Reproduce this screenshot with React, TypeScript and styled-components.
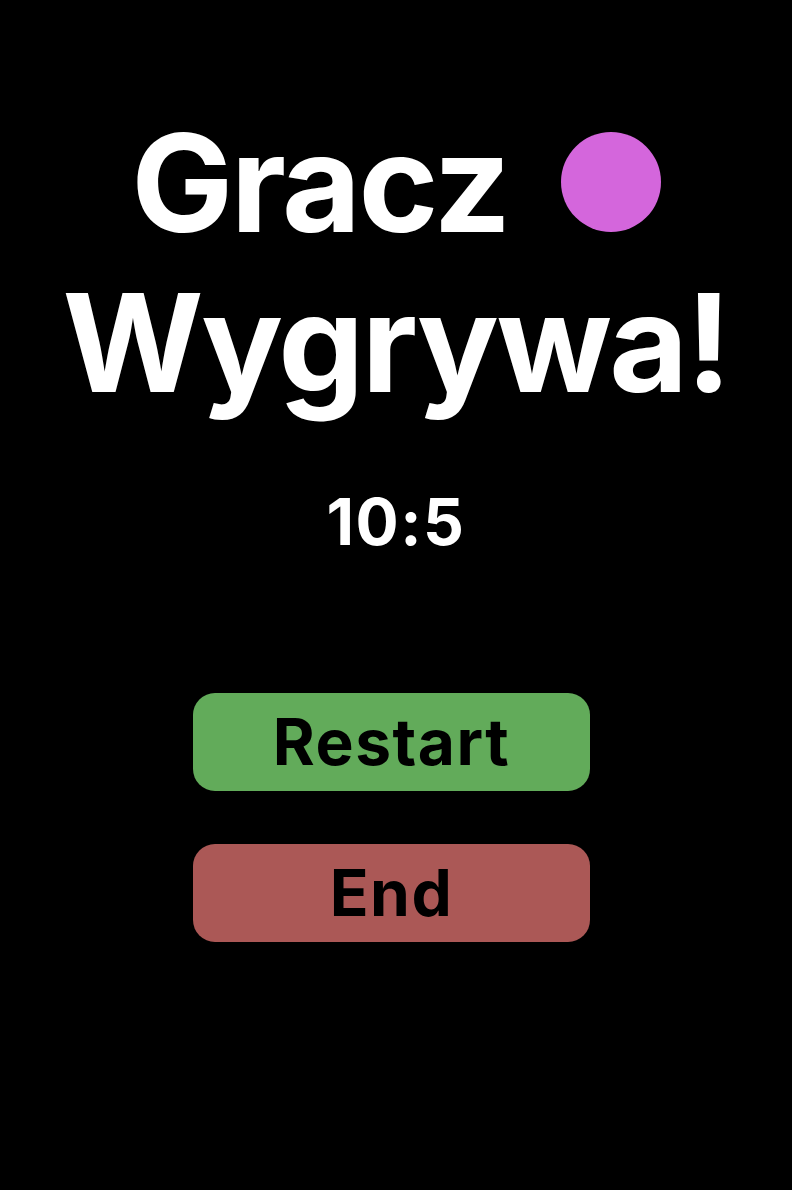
import React from "react";
import styled, { createGlobalStyle } from "styled-components";

const Global = createGlobalStyle`
  html, body {
    margin: 0;
    padding: 0;
    background: #000;
  }
  body {
    font-family: Inter, "Noto Sans", sans-serif;
    color: #fff;
  }
`;

const Screen = styled.main`
  min-height: 1190px;
  display: flex;
  flex-direction: column;
  align-items: center;
  padding-top: 103px;
  box-sizing: border-box;
`;

const Title = styled.h1`
  margin: 0;
  font-size: 136px;
  line-height: 160px;
  font-weight: 700;
  text-align: center;
  letter-spacing: -2.4px;
`;

const Dot = styled.span<{ $color: string }>`
  display: inline-block;
  width: 100px;
  height: 100px;
  border-radius: 50%;
  background: ${(p) => p.$color};
  margin-left: 52px;
`;

const Score = styled.div`
  margin-top: 60px;
  font-size: 64px;
  font-weight: 700;
  line-height: 77px;
  letter-spacing: 1.5px;
`;

const Actions = styled.div`
  margin-top: 133px;
  padding-right: 9px;
  display: flex;
  flex-direction: column;
  gap: 53px;
`;

const ActionButton = styled.button<{ $bg: string }>`
  width: 397px;
  height: 98px;
  border: none;
  border-radius: 22px;
  background: ${(p) => p.$bg};
  color: #000;
  font-family: Inter, "Noto Sans", sans-serif;
  font-size: 64px;
  font-weight: 700;
  line-height: 1;
  letter-spacing: 1.5px;
  padding: 0;
  display: flex;
  align-items: center;
  justify-content: center;
  cursor: pointer;
`;

export default function App() {
  return (
    <>
      <Global />
      <Screen>
        <Title>
          Gracz<Dot $color="#d466dc" />
          <br />
          Wygrywa!
        </Title>
        <Score>10:5</Score>
        <Actions>
          <ActionButton $bg="#62ab5a">Restart</ActionButton>
          <ActionButton $bg="#ab5856">End</ActionButton>
        </Actions>
      </Screen>
    </>
  );
}
